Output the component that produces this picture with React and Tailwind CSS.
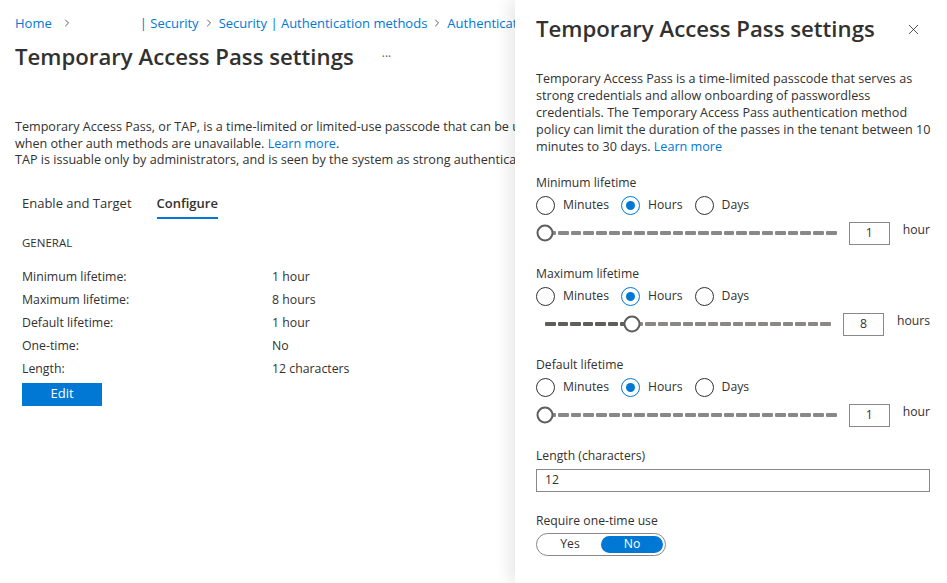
import React from 'react'
import { ChevronRight, X } from 'lucide-react'

const font = { fontFamily: '"Segoe UI", "Open Sans", sans-serif' }

const summary = [
  ['Minimum lifetime:', '1 hour'],
  ['Maximum lifetime:', '8 hours'],
  ['Default lifetime:', '1 hour'],
  ['One-time:', 'No'],
  ['Length:', '12 characters'],
]

function Radio({ label, checked }) {
  return (
    <label className="flex items-center gap-[8px]">
      <span
        className={`flex h-[19px] w-[19px] items-center justify-center rounded-full border ${
          checked ? 'border-[#0078d4]' : 'border-[#323130]'
        }`}
      >
        {checked && <span className="h-[9px] w-[9px] rounded-full bg-[#0078d4]" />}
      </span>
      <span>{label}</span>
    </label>
  )
}

function Slider({ value, max = 24 }) {
  const pct = ((value - 1) / (max - 1)) * 100
  return (
    <div className="flex h-[24px] flex-1 items-center px-[9px]">
      <div className="relative flex w-full gap-[2px]">
        {Array.from({ length: max - 1 }).map((_, i) => (
          <div
            key={i}
            className={`h-[4px] flex-1 rounded-[1px] ${i < value - 1 ? 'bg-[#605e5c]' : 'bg-[#8a8886]'}`}
          />
        ))}
        <div
          className="absolute top-1/2 h-[17px] w-[17px] -translate-x-1/2 -translate-y-1/2 rounded-full border-2 border-[#605e5c] bg-white"
          style={{ left: `${pct}%` }}
        />
      </div>
    </div>
  )
}

function Lifetime({ title, value, unit }) {
  return (
    <div>
      <div className="h-[18px] leading-[18px]">{title}</div>
      <div className="mt-[3px] flex h-[20px] items-center gap-[12px]">
        <Radio label="Minutes" />
        <Radio label="Hours" checked />
        <Radio label="Days" />
      </div>
      <div className="mt-[6px] flex h-[24px] items-center">
        <Slider value={value} />
        <div className="ml-[3px] flex h-[23px] w-[41px] items-center justify-center border border-[#8a8886]">
          {value}
        </div>
        <div className="-mt-[5px] ml-[13px]">{unit}</div>
      </div>
    </div>
  )
}

export default function App() {
  return (
    <div className="relative h-[583px] w-[947px] overflow-hidden bg-white text-[#323130]" style={font}>
      <main className="h-full w-[515px] overflow-hidden whitespace-nowrap pl-[15px]">
        <nav className="flex h-[18px] items-center pt-[14px] text-[13px] leading-[18px] text-[#0078d4] *:shrink-0" style={{ boxSizing: 'content-box' }}>
          <span>Home</span>
          <ChevronRight size={12} className="ml-[9px] text-[#605e5c]" />
          <span className="ml-[67px]">| Security</span>
          <ChevronRight size={12} className="mx-[4px] text-[#605e5c]" />
          <span>Security | Authentication methods</span>
          <ChevronRight size={12} className="mx-[4px] text-[#605e5c]" />
          <span>Authentication methods</span>
        </nav>

        <div className="mt-[9px] flex h-[32px] items-center">
          <h1 className="text-[22.2px] font-semibold leading-[32px]">Temporary Access Pass settings</h1>
          <span className="ml-[28px] text-[12px] text-[#605e5c]">···</span>
        </div>

        <div className="mt-[46px] text-[12.6px] leading-[16.5px]">
          <p>
            Temporary Access Pass, or TAP, is a time-limited or limited-use passcode that can be used by users for
            bootstrapping new accounts, account recovery, or
          </p>
          <p>
            when other auth methods are unavailable. <span className="text-[#0078d4]">Learn more</span>.
          </p>
          <p>
            TAP is issuable only by administrators, and is seen by the system as strong authentication. It is not usable
            for self-service password reset.
          </p>
        </div>

        <div className="mt-[24px] flex gap-[25px] pl-[7px] text-[13px] leading-[20px]">
          <div className="pb-[6px]">Enable and Target</div>
          <div className="border-b-2 border-[#0078d4] pb-[4px] font-semibold">Configure</div>
        </div>

        <div className="pl-[7px]">
          <div className="mt-[16px] h-[16px] text-[11.5px] leading-[16px]">GENERAL</div>
          <div className="mt-[15.5px] text-[12.3px]">
            {summary.map(([k, v]) => (
              <div key={k} className="flex h-[23px] items-center">
                <div className="w-[250px]">{k}</div>
                <div>{v}</div>
              </div>
            ))}
          </div>
          <button className="mt-[1.5px] flex h-[23px] w-[80px] items-center justify-center bg-[#0078d4] text-[13px] text-white">
            Edit
          </button>
        </div>
      </main>

      <aside className="absolute right-0 top-0 h-full w-[432px] whitespace-nowrap bg-white pl-[21px] pr-[17px] text-[12.2px] shadow-[-6px_0_14px_rgba(0,0,0,0.09)]">
        <div className="mt-[13px] flex h-[32px] items-center justify-between">
          <h2 className="text-[22.2px] font-semibold leading-[32px]">Temporary Access Pass settings</h2>
          <X size={17} strokeWidth={1.2} className="mr-[8px] text-[#323130]" />
        </div>

        <p className="mt-[24.5px] text-[12.6px] leading-[17px]">
          Temporary Access Pass is a time-limited passcode that serves as
          <br />
          strong credentials and allow onboarding of passwordless
          <br />
          credentials. The Temporary Access Pass authentication method
          <br />
          policy can limit the duration of the passes in the tenant between 10
          <br />
          minutes to 30 days. <span className="text-[#0078d4]">Learn more</span>
        </p>

        <div className="mt-[19.5px] flex flex-col gap-[20px]">
          <Lifetime title="Minimum lifetime" value={1} unit="hour" />
          <Lifetime title="Maximum lifetime" value={8} unit="hours" />
          <Lifetime title="Default lifetime" value={1} unit="hour" />

          <div>
            <div className="h-[18px] leading-[18px]">Length (characters)</div>
            <div className="mt-[4px] flex h-[23px] items-center border border-[#8a8886] px-[8px]">12</div>
          </div>

          <div>
            <div className="h-[18px] leading-[18px]">Require one-time use</div>
            <div className="mt-[3px] flex h-[23px] w-[130px] items-center rounded-full border border-[#8a8886] p-[2px]">
              <div className="flex-1 text-center">Yes</div>
              <div className="flex h-full w-[62px] items-center justify-center rounded-full bg-[#0078d4] text-white">
                No
              </div>
            </div>
          </div>
        </div>
      </aside>
    </div>
  )
}
